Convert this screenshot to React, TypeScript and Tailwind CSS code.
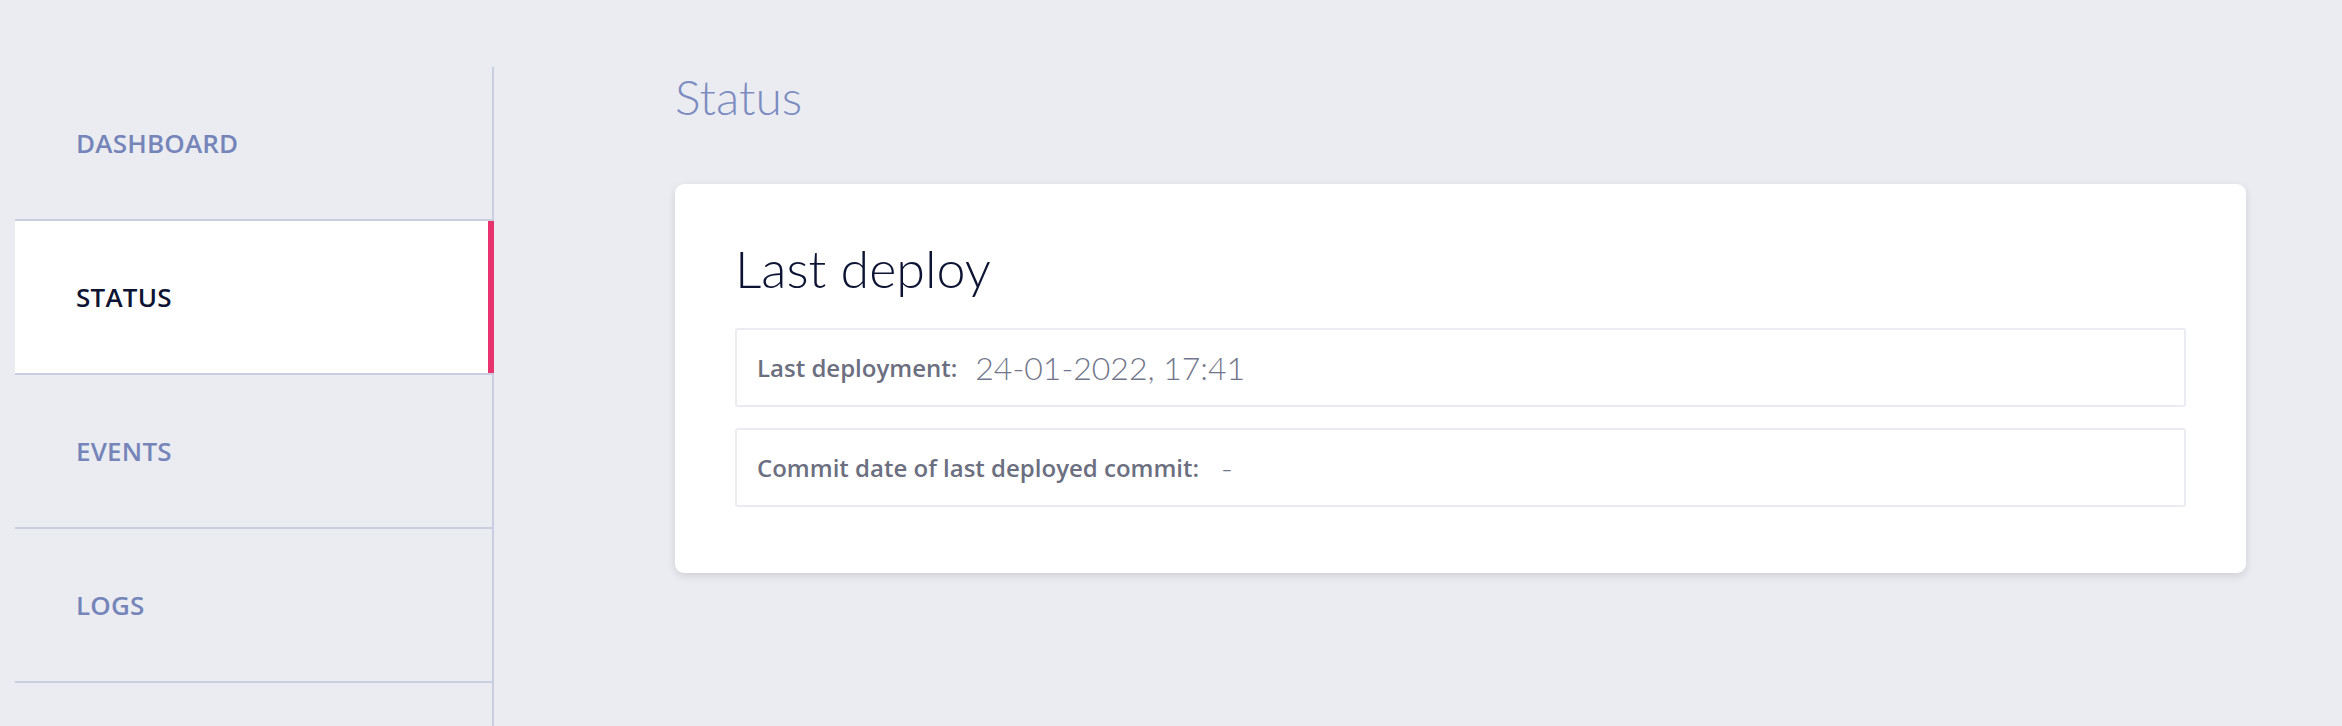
import React from "react";

const items = ["DASHBOARD", "STATUS", "EVENTS", "LOGS"];

export default function App() {
  return (
    <div className="w-[2342px] h-[726px] bg-[#ebecf1] flex pt-[67px] overflow-hidden">
      <div className="ml-[15px] w-[479px] h-[659px] border-r-2 border-[#c9cfe1] flex flex-col shrink-0">
        {items.map((it) => {
          const active = it === "STATUS";
          return (
            <div
              key={it}
              className={
                "relative h-[154px] shrink-0 flex items-center pl-[61px] border-b-2 border-[#c9cfe1] " +
                (active ? "bg-white" : "")
              }
              style={{ fontFamily: "'Open Sans', sans-serif" }}
            >
              <span className={"text-[26px] font-semibold tracking-[0.2px] " + (active ? "text-[#0d1433]" : "text-[#7585b9]")}>
                {it}
              </span>
              {active && <div className="absolute right-[-2px] top-0 bottom-0 w-[6px] bg-[#e8336f]" />}
            </div>
          );
        })}
      </div>
      <div className="ml-[181px] flex flex-col" style={{ fontFamily: "Lato, sans-serif" }}>
        <h1 className="text-[48px] font-light text-[#7d8cc0] leading-none mt-[6px]">Status</h1>
        <div className="mt-[63px] w-[1571px] h-[389px] bg-white rounded-[9px] shadow-[0_3px_8px_rgba(0,0,0,0.12)] pl-[60px] pr-[60px] pt-[58px]">
          <h2 className="text-[52px] font-light text-[#0d1433] leading-none">Last deploy</h2>
          <div className="mt-[34px] flex flex-col gap-[21px]">
            <div className="h-[79px] border-2 border-[#ebecf1] rounded-[3px] flex items-center pl-[20px]">
              <span className="text-[24px] font-semibold text-[#6b6f80]" style={{ fontFamily: "'Open Sans', sans-serif" }}>Last deployment:</span>
              <span className="ml-[18px] text-[32px] font-light text-[#72768a]">24-01-2022, 17:41</span>
            </div>
            <div className="h-[79px] border-2 border-[#ebecf1] rounded-[3px] flex items-center pl-[20px]">
              <span className="text-[24px] font-semibold text-[#6b6f80]" style={{ fontFamily: "'Open Sans', sans-serif" }}>Commit date of last deployed commit:</span>
              <span className="ml-[22px] text-[32px] font-light text-[#72768a]">-</span>
            </div>
          </div>
        </div>
      </div>
    </div>
  );
}
